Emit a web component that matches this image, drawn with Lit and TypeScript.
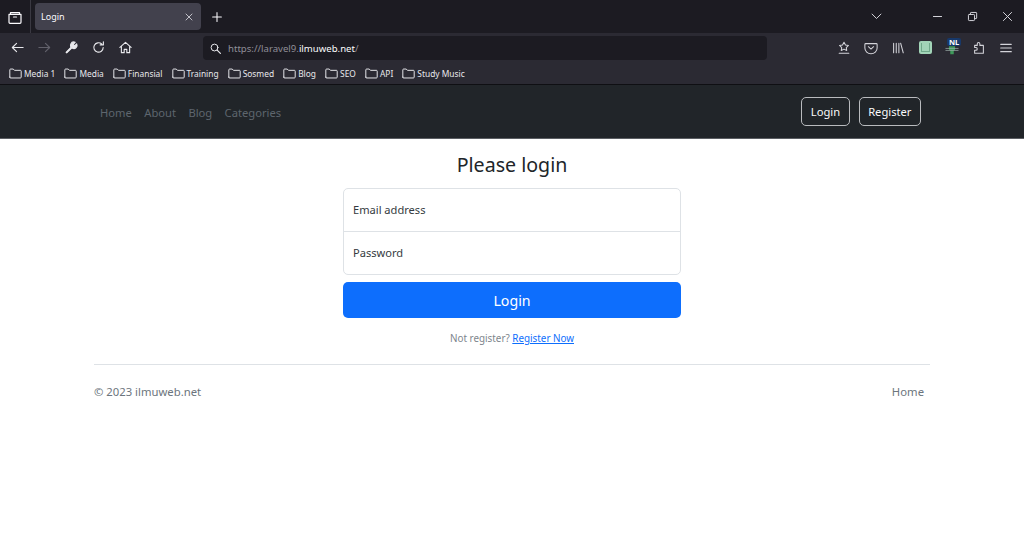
import { LitElement, html, css, svg } from "lit";
import { customElement } from "lit/decorators.js";

const ic = (body: unknown, cls = "", size = 16) => html`<svg class="ic ${cls}" width=${size} height=${size} viewBox="0 0 16 16" fill="none" stroke="currentColor" stroke-width="1.2" stroke-linecap="round" stroke-linejoin="round">${body}</svg>`;

const folder = svg`<path d="M1 12.500V3.500a1 1 0 0 1 1-1h3.200l1.500 1.600H14a1 1 0 0 1 1 1v7.400a1 1 0 0 1-1 1H2a1 1 0 0 1-1-1z"/>`;
const bookmarks = ["Media 1", "Media", "Finansial", "Training", "Sosmed", "Blog", "SEO", "API", "Study Music"];

@customElement("app-root")
export class AppRoot extends LitElement {
  static styles = css`
    :host { display: block; width: 1024px; height: 546px; overflow: hidden; background: #fff; font-family: "Noto Sans", "Open Sans", sans-serif; color: #212529; }
    .ic { display: block; flex: none; }
    .tabstrip { height: 33px; background: #1c1b22; display: flex; align-items: center; color: #fbfbfe; }
    .viewbtn { width: 31px; height: 33px; display: flex; align-items: center; justify-content: center; border-right: 1px solid #3a3942; box-sizing: border-box; }
    .tab { width: 166px; height: 27px; margin-left: 4px; background: #42414d; border-radius: 4px; display: flex; align-items: center; justify-content: space-between; padding: 0 6px 0 6px; box-sizing: border-box; font-size: 9px; }
    .tab .ic { color: #cfcfd6; }
    .newtab { margin-left: 9px; }
    .winctl { margin-left: auto; display: flex; align-items: center; color: #d8d8de; }
    .chev { margin-right: 48px; }
    .winbtn { margin-right: 22px; }
    .winbtn.last { margin-right: 10px; }
    .toolbar { height: 29px; background: #2b2a33; display: flex; align-items: center; color: #e8e8ec; padding-left: 10px; }
    .tb { margin-right: 12px; }
    .tb.dim { color: #62616b; }
    .spacer { width: 58px; flex: none; }
    .url { width: 564px; height: 24px; background: #1c1b22; border-radius: 4px; display: flex; align-items: center; padding-left: 6px; box-sizing: border-box; font-size: 9.600px; color: #8f8e97; gap: 6px; margin-top: 1px; }
    .url .ic { color: #e8e8ec; }
    .url b { font-weight: 400; color: #fbfbfe; }
    .tools { margin-left: auto; display: flex; align-items: center; gap: 13px; padding-right: 11px; color: #d4d4da; }
    .ext { width: 14px; height: 14px; display: flex; align-items: center; justify-content: center; }
    .extbox { width: 13px; height: 13px; background: #a2d4b8; border-radius: 2px; padding: 2px; box-sizing: border-box; }
    .extin { height: 100%; border: 1px solid #6fa88a; border-top: none; box-sizing: border-box; }
    .nlwrap { position: relative; width: 14px; height: 14px; }
    .nlbadge { position: absolute; top: -3px; left: 2px; background: #17386a; color: #fff; font-size: 7.500px; font-weight: 700; line-height: 8px; padding: 0 2px; border-radius: 2px; }
    .bookmarks { height: 22px; background: #2b2a33; display: flex; align-items: center; padding-left: 9px; font-size: 8.400px; color: #e8e8ec; gap: 9.100px; border-bottom: 1px solid #0f0f13; }
    .bm { display: flex; align-items: center; gap: 2px; }
    .bm span { padding-top: 1px; }
    nav { height: 53px; background: #212529; border-bottom: 1px solid #5b5e63; display: flex; align-items: center; padding: 0 103px 0 100px; }
    .links { display: flex; gap: 12.400px; font-size: 11.200px; color: #5e666e; margin-top: 1px; }
    .auth { margin-left: auto; display: flex; gap: 9px; }
    .btn-o { height: 29px; display: flex; align-items: center; padding: 0 8.500px; border: 1px solid #b9bbbe; border-radius: 5px; box-sizing: border-box; color: #f8f9fa; font-size: 11.200px; }
    main { display: flex; flex-direction: column; align-items: center; }
    h1 { margin: 11px 0 0; font-size: 19.600px; font-weight: 400; line-height: 29px; }
    .fields { width: 338px; margin-top: 9px; border: 1px solid #dee2e6; border-radius: 5px; box-sizing: border-box; }
    .field { height: 40px; display: flex; align-items: center; padding: 0 0 2px 9px; font-size: 11.100px; color: #343a40; box-sizing: content-box; }
    .field + .field { border-top: 1px solid #dee2e6; }
    .submit { width: 338px; height: 36px; margin-top: 7px; background: #0d6efd; color: #fff; border-radius: 5px; display: flex; align-items: center; justify-content: center; font-size: 14.200px; }
    .note { margin-top: 13px; font-size: 9.850px; color: #7d858c; line-height: 14px; }
    .note a { color: #0d6efd; text-decoration: underline; }
    footer { margin: 19px 94px 0; border-top: 1px solid #dee2e6; height: 53px; display: flex; align-items: center; justify-content: space-between; padding: 0 6px 2px 0; font-size: 11.300px; color: #6c757d; }
  `;

  render() {
    return html`
      <div class="tabstrip">
        <div class="viewbtn">${ic(svg`<path d="M3.500 3.500h9v1.800h-9z"/><path d="M2 5.300h12v8a1 1 0 0 1-1 1H3a1 1 0 0 1-1-1z"/><path d="M6.500 8h3"/>`)}</div>
        <div class="tab"><span>Login</span>${ic(svg`<path d="M4 4l8 8M12 4l-8 8"/>`, "", 12)}</div>
        <div class="newtab">${ic(svg`<path d="M8 3v10M3 8h10"/>`, "", 14)}</div>
        <div class="winctl">
          <div class="chev">${ic(svg`<path d="M2.500 5L8 10.500 13.500 5"/>`, "", 13)}</div>
          <div class="winbtn">${ic(svg`<path d="M3 8h10"/>`, "", 13)}</div>
          <div class="winbtn">${ic(svg`<rect x="3" y="5.500" width="7.500" height="7.500" rx="1"/><path d="M5.500 5V3.800a.8.8 0 0 1 .8-.8h6a.8.8 0 0 1 .8.8v6a.8.8 0 0 1-.8.8H11"/>`, "", 13)}</div>
          <div class="winbtn last">${ic(svg`<path d="M3 3l10 10M13 3L3 13"/>`, "", 13)}</div>
        </div>
      </div>
      <div class="toolbar">
        <div class="tb">${ic(svg`<path d="M14 8H2.500M7 3.500L2.500 8 7 12.500"/>`, "", 15)}</div>
        <div class="tb dim">${ic(svg`<path d="M2 8h11.500M9 3.500L13.500 8 9 12.500"/>`, "", 15)}</div>
        <div class="tb">${ic(svg`<path d="M2.800 13.200L7.500 8.500M9 8.900a3.500 3.500 0 0 1-1.700-4.700 3.500 3.500 0 0 1 4.600-1.700L9.800 4.700l1.500 1.500 2.200-2.100a3.500 3.500 0 0 1-4.500 4.800z" fill="currentColor"/><path d="M2.800 13.200L7.500 8.500" stroke-width="2.200"/>`, "", 15)}</div>
        <div class="tb">${ic(svg`<path d="M13 8a5 5 0 1 1-1.600-3.700M13.200 1.800v3.400H9.800"/>`, "", 15)}</div>
        <div class="tb">${ic(svg`<path d="M2 7.800L8 2.500l6 5.300M3.600 6.600v6.900h3v-3.500h2.800v3.500h3V6.600"/>`, "", 15)}</div>
        <div class="spacer"></div>
        <div class="url">
          ${ic(svg`<circle cx="6.800" cy="6.800" r="4.200"/><path d="M10 10l4 4" stroke-width="1.600"/>`, "", 13)}
          <span>https://laravel9.<b>ilmuweb.net</b>/</span>
        </div>
        <div class="tools">
          ${ic(svg`<path d="M8 1.500l1.700 3 3.400.6-2.500 2.400.5 3.300L8 9.300l-3.100 1.500.5-3.300-2.500-2.400 3.400-.6zM2.500 14h11"/>`, "", 14)}
          ${ic(svg`<path d="M2 3h12a1 1 0 0 1 1 1v4a7 6.500 0 0 1-14 0V4a1 1 0 0 1 1-1zM5 6.500l3 2.700 3-2.700"/>`, "", 14)}
          ${ic(svg`<path d="M3 2.500v11M6 2.500v11M9 2.500v11M11 2.500l3 11"/>`, "", 14)}
          <div class="ext"><div class="extbox"><div class="extin"></div></div></div>
          <div class="nlwrap">${ic(svg`<path d="M4.500 6h7v4l-1.500 1v4H6v-4L4.500 10z" fill="#3f9a5b" stroke="none"/><path d="M1 8.500h14M1 10.800h14" stroke="#9fb0aa" stroke-width=".8"/>`, "", 14)}<span class="nlbadge">NL</span></div>
          ${ic(svg`<path d="M6 5V3.300a1.500 1.500 0 0 1 3 0V5h4v9H3v-3.500h1.500a1.500 1.500 0 0 0 0-3H3V5z"/>`, "", 14)}
          ${ic(svg`<path d="M2 3.800h12M2 8h12M2 12.200h12" stroke-width="1.400"/>`, "", 14)}
        </div>
      </div>
      <div class="bookmarks">
        ${bookmarks.map((b) => html`<div class="bm">${ic(folder, "", 13)}<span>${b}</span></div>`)}
      </div>
      <nav>
        <div class="links"><span>Home</span><span>About</span><span>Blog</span><span>Categories</span></div>
        <div class="auth"><div class="btn-o">Login</div><div class="btn-o">Register</div></div>
      </nav>
      <main>
        <h1>Please login</h1>
        <div class="fields">
          <div class="field">Email address</div>
          <div class="field">Password</div>
        </div>
        <div class="submit">Login</div>
        <div class="note">Not register? <a>Register Now</a></div>
      </main>
      <footer><span>© 2023 ilmuweb.net</span><span>Home</span></footer>
    `;
  }
}
